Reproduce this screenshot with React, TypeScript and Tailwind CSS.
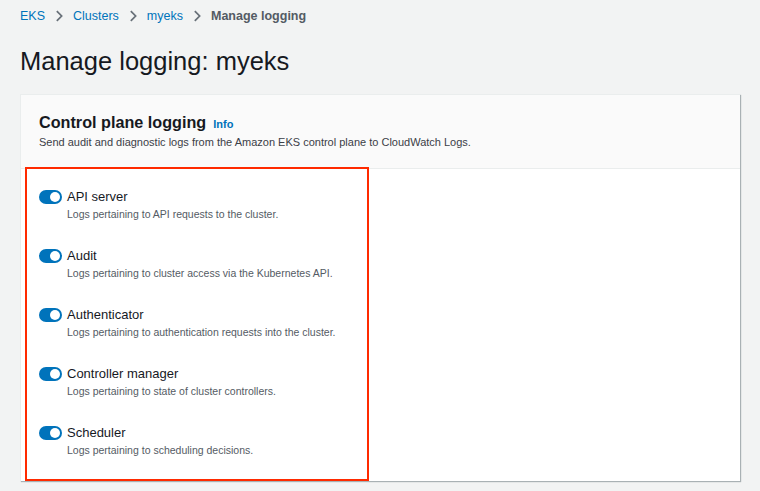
import React from "react";

const items = [
  { label: "API server", desc: "Logs pertaining to API requests to the cluster." },
  { label: "Audit", desc: "Logs pertaining to cluster access via the Kubernetes API." },
  { label: "Authenticator", desc: "Logs pertaining to authentication requests into the cluster." },
  { label: "Controller manager", desc: "Logs pertaining to state of cluster controllers." },
  { label: "Scheduler", desc: "Logs pertaining to scheduling decisions." },
];

function Chevron() {
  return (
    <svg width="14" height="14" viewBox="0 0 16 16" className="mx-[7px]">
      <path d="M5.5 2.5 11 8l-5.5 5.5" fill="none" stroke="#687078" strokeWidth="2" />
    </svg>
  );
}

function Toggle() {
  return (
    <div className="relative h-[14px] w-[23px] shrink-0 rounded-full bg-[#0073bb]">
      <div className="absolute right-[2px] top-[2px] h-[10px] w-[10px] rounded-full bg-white" />
    </div>
  );
}

export default function App() {
  return (
    <div
      className="h-[491px] w-[760px] overflow-hidden bg-[#f2f3f3] px-[20px] pt-[7px]"
      style={{ fontFamily: '"Liberation Sans", Arial, sans-serif' }}
    >
      {/* Breadcrumbs */}
      <nav className="flex items-center text-[12.5px] leading-[18px]">
        <span className="text-[#0073bb]">EKS</span>
        <Chevron />
        <span className="text-[#0073bb]">Clusters</span>
        <Chevron />
        <span className="text-[#0073bb]">myeks</span>
        <Chevron />
        <span className="font-bold text-[#545b64]">Manage logging</span>
      </nav>

      <h1 className="mt-[19px] text-[25.5px] leading-[34px] text-[#16191f]">Manage logging: myeks</h1>

      {/* Card */}
      <div className="mt-[16px] w-[720px] border-l border-t border-[#eaeded] bg-white shadow-[1px_1px_1px_0_rgba(0,28,36,0.3)]">
        <div className="border-b border-[#eaeded] bg-[#fafafa] px-[18px] pb-[18px] pt-[16px]">
          <div className="flex items-baseline">
            <h2 className="text-[16.2px] font-bold leading-[22px] text-[#16191f]">Control plane logging</h2>
            <span className="ml-[7px] text-[11px] font-bold text-[#0073bb]">Info</span>
          </div>
          <p className="mt-[1px] text-[11px] leading-[16px] text-[#3b4047]">
            Send audit and diagnostic logs from the Amazon EKS control plane to CloudWatch Logs.
          </p>
        </div>

        <div className="-mb-[1px] -mt-[2px] pl-[4px]">
          <div className="flex w-[344px] flex-col gap-[25px] border-2 border-[#ff2a00] pb-[21px] pl-[12px] pt-[19px]">
            {items.map((it) => (
              <div key={it.label} className="flex items-start gap-[5px]">
                <div className="pt-[2px]">
                  <Toggle />
                </div>
                <div>
                  <div className="text-[13px] leading-[18px] text-[#16191f]">{it.label}</div>
                  <div className="text-[10.5px] leading-[16px] text-[#545b64]">{it.desc}</div>
                </div>
              </div>
            ))}
          </div>
        </div>
      </div>
    </div>
  );
}
